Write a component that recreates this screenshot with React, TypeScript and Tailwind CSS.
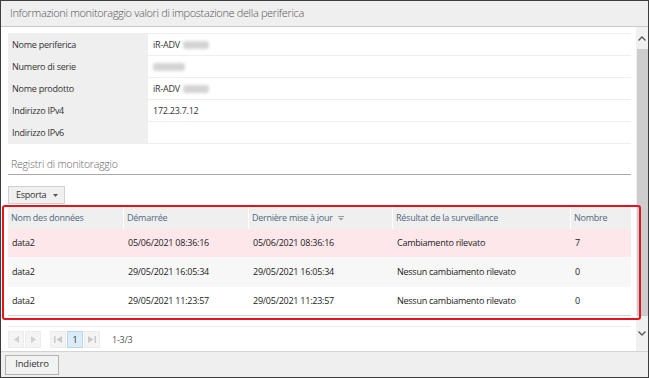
import React from "react";

const font = { fontFamily: '"Open Sans", "Noto Sans", sans-serif' };

function Blur({ w }: { w: number }) {
  return (
    <span
      className="inline-block h-[8px] rounded-[3px] bg-[#d4d4d4] blur-[1.5px] align-middle"
      style={{ width: w }}
    />
  );
}

const info: [string, React.ReactNode][] = [
  ["Nome periferica", <span className="flex items-center gap-[3px]">iR-ADV <Blur w={26} /></span>],
  ["Numero di serie", <span className="flex items-center"><Blur w={32} /></span>],
  ["Nome prodotto", <span className="flex items-center gap-[3px]">iR-ADV <Blur w={26} /></span>],
  ["Indirizzo IPv4", "172.23.7.12"],
  ["Indirizzo IPv6", ""],
];

const cols = [
  { label: "Nom des données", w: "w-[116px]" },
  { label: "Démarrée", w: "w-[125px]" },
  { label: "Dernière mise à jour", w: "w-[144px]", sort: true },
  { label: "Résultat de la surveillance", w: "w-[178px]" },
  { label: "Nombre", w: "flex-1" },
];

const rows = [
  { c: ["data2", "05/06/2021 08:36:16", "05/06/2021 08:36:16", "Cambiamento rilevato", "7"], bg: "bg-[#fde7ea]", h: "h-[28px]" },
  { c: ["data2", "29/05/2021 16:05:34", "29/05/2021 16:05:34", "Nessun cambiamento rilevato", "0"], bg: "bg-[#f7f7f7]", h: "h-[30px]" },
  { c: ["data2", "29/05/2021 11:23:57", "29/05/2021 11:23:57", "Nessun cambiamento rilevato", "0"], bg: "bg-white", h: "h-[29px]" },
];

function PagerBtn({ children, active }: { children?: React.ReactNode; active?: boolean }) {
  return (
    <div
      className={
        "w-[16px] h-[17px] flex items-center justify-center border " +
        (active ? "bg-[#d9ecf7] border-[#b5d6ea] text-[#333]" : "bg-[#f4f4f4] border-[#ececec]")
      }
    >
      {children}
    </div>
  );
}

export default function App() {
  return (
    <div className="w-[649px] h-[378px] bg-white text-[#333]" style={font}>
      <div className="relative w-[649px] h-[378px] border border-[#3d3d3d] flex flex-col overflow-hidden">
        {/* title bar */}
        <div className="h-[26px] shrink-0 bg-[#efefef] border-b border-[#c9c9c9] flex items-center pl-[9px] text-[11px] font-light text-[#555] tracking-[-0.35px]">
          Informazioni monitoraggio valori di impostazione della periferica
        </div>
        {/* body */}
        <div className="flex-1 flex min-h-0">
          <div className="flex-1 pl-[7px] pr-[5px] pt-[6px] text-[9px] tracking-[-0.25px]">
            {/* info table */}
            <div className="border-t border-[#eeeeee]">
              {info.map(([k, v]) => (
                <div key={k} className="flex h-[22px] border-b border-[#efefef]">
                  <div className="w-[140px] bg-[#efefef] flex items-center pl-[4px]">{k}</div>
                  <div className="flex-1 flex items-center pl-[5px]">{v}</div>
                </div>
              ))}
            </div>
            {/* section heading */}
            <div className="mt-[11px] h-[20px] flex items-center pl-[3px] border-b border-[#a9a9a9] text-[10.5px] font-light text-[#666] tracking-[-0.2px]">
              Registri di monitoraggio
            </div>
            {/* export button */}
            <div className="mt-[11px] w-[57px] h-[18px] bg-[#f0f0f0] border border-[#d0d0d0] flex items-center pl-[7px] gap-[7px]">
              <span>Esporta</span>
              <svg width="5" height="3" viewBox="0 0 5 3"><path d="M0 0h5L2.5 3z" fill="#555" /></svg>
            </div>
            {/* data table */}
            <div className="mt-[3px]">
              <div className="flex h-[22px] bg-[#efefef] text-[#50687f]">
                {cols.map((c, i) => (
                  <div key={c.label} className={c.w + " flex items-center pl-[3px] gap-[5px] " + (i < 4 ? "border-r border-white" : "")}>
                    <span>{c.label}</span>
                    {c.sort && (
                      <svg width="6" height="5" viewBox="0 0 6 5">
                        <path d="M0 0.5h6" stroke="#999" strokeWidth="1" />
                        <path d="M0.5 2h5L3 4.5z" fill="#999" />
                      </svg>
                    )}
                  </div>
                ))}
              </div>
              {rows.map((r, ri) => (
                <div key={ri} className={"flex " + r.h + " " + r.bg + (ri === 2 ? " border-b border-[#d0d0d0]" : "")}>
                  {r.c.map((t, i) => (
                    <div key={i} className={cols[i].w + " flex items-center pl-[4px] text-[#222]"}>{t}</div>
                  ))}
                </div>
              ))}
            </div>
            {/* pager */}
            <div className="mt-[10px] border-t border-[#ebebeb] pt-[4px] flex items-center">
              <div className="flex gap-[1px]">
                <PagerBtn>
                  <svg width="5" height="7" viewBox="0 0 5 7"><path d="M5 0v7L0 3.5z" fill="#d0d0d0" /></svg>
                </PagerBtn>
                <PagerBtn>
                  <svg width="5" height="7" viewBox="0 0 5 7"><path d="M0 0v7l5-3.5z" fill="#d0d0d0" /></svg>
                </PagerBtn>
              </div>
              <div className="flex gap-[1px] ml-[9px]">
                <PagerBtn>
                  <svg width="8" height="7" viewBox="0 0 8 7"><path d="M0 0h1.5v7H0z M8 0v7L2.5 3.5z" fill="#c8c8c8" /></svg>
                </PagerBtn>
                <PagerBtn active>
                  <span className="text-[9px]">1</span>
                </PagerBtn>
                <PagerBtn>
                  <svg width="8" height="7" viewBox="0 0 8 7"><path d="M0 0v7l5.5-3.5z M6.5 0H8v7H6.5z" fill="#c8c8c8" /></svg>
                </PagerBtn>
              </div>
              <span className="ml-[12px] text-[#555]">1-3/3</span>
            </div>
          </div>
          {/* scrollbar */}
          <div className="w-[12px] bg-[#f0f0f0] flex flex-col items-center">
            <div className="h-[22px] flex items-center justify-center">
              <svg width="8" height="5" viewBox="0 0 8 5"><path d="M0.5 4.5L4 1l3.5 3.5" stroke="#555" strokeWidth="1.3" fill="none" /></svg>
            </div>
            <div className="w-[11px] h-[267px] bg-[#cdcdcd]" />
            <div className="flex-1 flex items-center justify-center">
              <svg width="8" height="5" viewBox="0 0 8 5"><path d="M0.5 0.5L4 4l3.5-3.5" stroke="#555" strokeWidth="1.3" fill="none" /></svg>
            </div>
          </div>
        </div>
        {/* footer */}
        <div className="h-[26px] shrink-0 bg-[#efefef] border-t border-[#d4d4d4] flex items-center pl-[4px]">
          <div className="w-[54px] h-[20px] bg-[#f2f2f2] border border-[#b3b3b3] flex items-center justify-center text-[9.5px] tracking-[-0.2px]">
            Indietro
          </div>
        </div>
        {/* red highlight */}
        <div className="absolute left-[1px] top-[204px] w-[639px] h-[115px] border-2 border-[#e8121d] rounded-[3px] pointer-events-none" />
      </div>
    </div>
  );
}
